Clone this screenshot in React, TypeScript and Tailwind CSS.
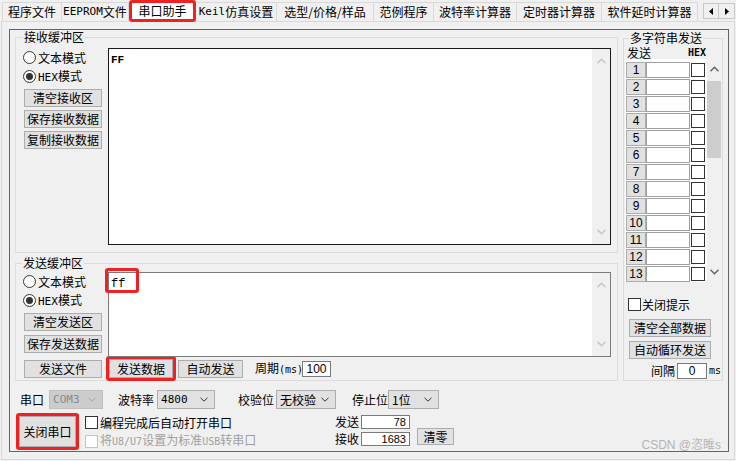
import React from "react";

const mono = "font-['DejaVu_Sans_Mono',monospace]";

const tabs = [
  { key: "t1", w: "w-[60px]", label: <>程序文件</> },
  { key: "t2", w: "w-[67px]", label: <><span className={`${mono} text-[11px]`}>EEPROM</span>文件</> },
  { key: "t3", w: "w-[67px]", label: <>串口助手</>, active: true },
  { key: "t4", w: "w-[81px]", label: <><span className={`${mono} text-[11px]`}>Keil</span>仿真设置</> },
  { key: "t5", w: "w-[97px]", label: <>选型/价格/样品</> },
  { key: "t6", w: "w-[60px]", label: <>范例程序</> },
  { key: "t7", w: "w-[83px]", label: <>波特率计算器</> },
  { key: "t8", w: "w-[85px]", label: <>定时器计算器</> },
  { key: "t9", w: "w-[96px]", label: <>软件延时计算器</> },
];

const Chevron = ({ dir, color }: { dir: "up" | "down"; color: string }) => (
  <svg width="9" height="6" viewBox="0 0 9 6">
    <path
      d={dir === "up" ? "M0.5 5.2 L4.5 1.2 L8.5 5.2" : "M0.5 0.8 L4.5 4.8 L8.5 0.8"}
      fill="none"
      stroke={color}
      strokeWidth="1.4"
    />
  </svg>
);

const Btn = ({ className = "", children }: { className?: string; children?: React.ReactNode }) => (
  <button
    type="button"
    className={`flex items-center justify-center bg-[#e1e1e1] border border-[#adadad] text-[12px] leading-none text-black ${className}`}
  >
    {children}
  </button>
);

const Radio = ({ checked, children }: { checked?: boolean; children: React.ReactNode }) => (
  <div className="flex items-center h-[19px]">
    <span className="w-[13px] h-[13px] rounded-full border border-[#333333] bg-white flex items-center justify-center">
      {checked && <span className="w-[7px] h-[7px] rounded-full bg-[#333333]" />}
    </span>
    <span className="ml-[2px] leading-[14px]">{children}</span>
  </div>
);

const Check = ({ disabled }: { disabled?: boolean }) => (
  <span
    className={`w-[13px] h-[13px] bg-white border ${disabled ? "border-[#c4c4c4]" : "border-[#333333]"}`}
  />
);

const Select = ({ className = "", disabled, children }: { className?: string; disabled?: boolean; children: React.ReactNode }) => (
  <div
    className={`h-[19px] flex items-center justify-between pl-[3px] pr-[6px] border ${
      disabled ? "bg-[#cccccc] border-[#bfbfbf] text-[#8a8a8a]" : "bg-[#e1e1e1] border-[#adadad] text-black"
    } ${className}`}
  >
    <span className="leading-[14px] whitespace-nowrap">{children}</span>
    <svg width="8" height="5" viewBox="0 0 8 5" className="shrink-0">
      <path d="M0.5 0.8 L4 4.2 L7.5 0.8" fill="none" stroke={disabled ? "#a8a8a8" : "#333333"} strokeWidth="1" />
    </svg>
  </div>
);

const TextBox = ({ className = "", border, children, overlay }: { className?: string; border: string; children?: React.ReactNode; overlay?: React.ReactNode }) => (
  <div className={`relative flex bg-white border ${border} ${className}`}>
    <div className="flex-1 pl-[2px] pt-[3px] leading-[12px]">{children}</div>
    <div className="w-[18px] bg-[#f0f0f0] flex flex-col items-center justify-between py-[9px]">
      <Chevron dir="up" color="#c4c4c4" />
      <Chevron dir="down" color="#c4c4c4" />
    </div>
    {overlay}
  </div>
);

function TabBar() {
  return (
    <div className="flex items-end h-[21px] pl-[2px]">
      {tabs.map((t, i) =>
        t.active ? (
          <div
            key={t.key}
            className={`${t.w} relative z-10 h-[22px] -mb-px bg-white border-[3px] border-[#ee2222] rounded-[3px] flex items-center justify-center leading-[14px]`}
          >
            {t.label}
          </div>
        ) : (
          <div
            key={t.key}
            className={`${t.w} h-[19px] border-t border-r border-[#d9d9d9] ${i === 0 ? "border-l" : ""} flex items-center justify-center leading-[14px] whitespace-nowrap`}
          >
            {t.label}
          </div>
        )
      )}
      <div className="self-start mt-[3px] ml-[5px] flex border border-[#c8c8c8] bg-[#f0f0f0]">
        <div className="w-[15px] h-[14px] flex items-center justify-center border-r border-[#c8c8c8]">
          <svg width="4" height="7" viewBox="0 0 4 7">
            <path d="M4 0 L0 3.5 L4 7 Z" fill="#000" />
          </svg>
        </div>
        <div className="w-[15px] h-[14px] flex items-center justify-center">
          <svg width="4" height="7" viewBox="0 0 4 7">
            <path d="M0 0 L4 3.5 L0 7 Z" fill="#000" />
          </svg>
        </div>
      </div>
    </div>
  );
}

export default function App() {
  return (
    <div className="relative w-[736px] h-[461px] overflow-hidden bg-[#f0f0f0] text-black text-[12px] font-['Noto_Sans_CJK_SC',sans-serif]">
      <TabBar />
      <div className="ml-[1px] w-[734px] h-[439px] border border-[#d9d9d9] pt-[7px] pl-[7px]">
        <div className="w-[720px] h-[423px] border border-[#646464] flex flex-col">
          {/* top: buffers + multi-string */}
          <div className="flex h-[351px] pl-[5px]">
            <div className="w-[603px] flex flex-col">
              <fieldset className="h-[223px] border border-[#dcdcdc] min-w-0">
                <legend className="ml-[7px] px-[1px] leading-[14px]">接收缓冲区</legend>
                <div className="flex pt-[4px] pl-[7px]">
                  <div className="w-[85px] flex flex-col">
                    <Radio>文本模式</Radio>
                    <Radio checked>
                      <span className={`${mono} text-[11px]`}>HEX</span>模式
                    </Radio>
                    <Btn className="mt-[3px] ml-[1px] w-[78px] h-[18px]">清空接收区</Btn>
                    <Btn className="mt-[3px] ml-[1px] w-[78px] h-[18px]">保存接收数据</Btn>
                    <Btn className="mt-[3px] ml-[1px] w-[78px] h-[18px]">复制接收数据</Btn>
                  </div>
                  <TextBox className="w-[503px] h-[197px]" border="border-[#1a1a1a]">
                    <span className="font-['Liberation_Mono',monospace] text-[11px] font-bold">FF</span>
                  </TextBox>
                </div>
              </fieldset>

              <fieldset className="mt-[3px] h-[125px] border border-[#dcdcdc] min-w-0">
                <legend className="ml-[6px] px-[1px] leading-[14px]">发送缓冲区</legend>
                <div className="flex flex-col pt-[2px] pl-[7px]">
                  <div className="flex">
                    <div className="w-[85px] flex flex-col">
                      <Radio>文本模式</Radio>
                      <Radio checked>
                        <span className={`${mono} text-[11px]`}>HEX</span>模式
                      </Radio>
                      <Btn className="mt-[3px] ml-[1px] w-[78px] h-[18px]">清空发送区</Btn>
                      <Btn className="mt-[4px] ml-[1px] w-[78px] h-[18px]">保存发送数据</Btn>
                    </div>
                    <TextBox
                      className="w-[503px] h-[85px]"
                      border="border-[#7a7a7a]"
                      overlay={
                        <div className="absolute left-[-4px] top-[-5px] w-[34px] h-[25px] border-[3px] border-[#ee2222] rounded-[3px]" />
                      }
                    >
                      <span className="font-['Liberation_Mono',monospace] text-[12px]">ff</span>
                    </TextBox>
                  </div>
                  <div className="flex items-center h-[23px]">
                    <Btn className="ml-[1px] w-[78px] h-[18px]">发送文件</Btn>
                    <div className="ml-[4px] w-[70px] h-[25px] border-[3px] border-[#ee2222] rounded-[3px]">
                      <Btn className="w-full h-full border-[#0078d7]">发送数据</Btn>
                    </div>
                    <Btn className="ml-[2px] w-[65px] h-[18px]">自动发送</Btn>
                    <span className="ml-[12px] w-[47px] leading-[14px] whitespace-nowrap">
                      周期<span className={`${mono} text-[10px]`}>(ms)</span>
                    </span>
                    <div className="w-[29px] h-[16px] border border-[#7a7a7a] bg-white flex items-center justify-center font-['Liberation_Sans',sans-serif] leading-none">
                      100
                    </div>
                  </div>
                </div>
              </fieldset>
            </div>

            <fieldset className="ml-[5px] mt-[1px] w-[100px] h-[350px] border border-[#dcdcdc] min-w-0">
              <legend className="ml-[5px] px-[1px] leading-[14px]">多字符串发送</legend>
              <div className="flex items-end justify-between h-[14px] pl-[3px] pr-[16px] leading-[12px]">
                <span>发送</span>
                <span className={`${mono} text-[10px] font-bold`}>HEX</span>
              </div>
              <div className="ml-[1px] flex h-[223px]">
                <div className="w-[82px] bg-white pt-[2px] pl-[1px]">
                  {Array.from({ length: 13 }, (_, i) => (
                    <div key={i} className="flex items-center h-[17px]">
                      <Btn className="w-[20px] h-[16px] font-['Liberation_Sans',sans-serif]">{i + 1}</Btn>
                      <div className="w-[44px] h-[16px] border border-[#a0a0a0] bg-white" />
                      <span className="ml-[1px] w-[14px] h-[14px] border border-[#333333] bg-white" />
                    </div>
                  ))}
                </div>
                <div className="w-[14px] bg-[#f0f0f0] flex flex-col items-center">
                  <div className="h-[20px] flex items-center">
                    <Chevron dir="up" color="#606060" />
                  </div>
                  <div className="mt-[2px] w-full h-[77px] bg-[#cdcdcd]" />
                  <div className="flex-1" />
                  <div className="h-[20px] flex items-center">
                    <Chevron dir="down" color="#606060" />
                  </div>
                </div>
              </div>
              <div className="mt-[14px] flex items-center h-[17px] pl-[4px]">
                <Check />
                <span className="ml-[1px] leading-[14px]">关闭提示</span>
              </div>
              <Btn className="mt-[6px] ml-[5px] w-[82px] h-[18px]">清空全部数据</Btn>
              <Btn className="mt-[4px] ml-[5px] w-[82px] h-[18px]">自动循环发送</Btn>
              <div className="mt-[4px] flex items-center h-[16px] pl-[27px]">
                <span className="leading-none">间隔</span>
                <div className="ml-[2px] w-[30px] h-[16px] border border-[#7a7a7a] bg-white flex items-center justify-center font-['Liberation_Sans',sans-serif] leading-none">
                  0
                </div>
                <span className={`ml-[2px] ${mono} text-[10px] leading-none`}>ms</span>
              </div>
            </fieldset>
          </div>

          {/* serial settings */}
          <div className="flex items-center h-[19px] mt-[9px] pl-[10px] leading-none">
            <span>串口</span>
            <Select disabled className={`ml-[5px] w-[54px] ${mono} text-[11px]`}>COM3</Select>
            <span className="ml-[15px]">波特率</span>
            <Select className={`ml-[3px] w-[58px] ${mono} text-[11px]`}>4800</Select>
            <span className="ml-[23px]">校验位</span>
            <Select className="ml-[2px] w-[60px] pl-[1px]">无校验</Select>
            <span className="ml-[16px]">停止位</span>
            <Select className="w-[51px] pl-[1px]">1位</Select>
          </div>

          <div className="flex mt-[4px] pl-[6px]">
            <div className="w-[63px] h-[37px] border-[3px] border-[#ee2222] rounded-[3px]">
              <Btn className="w-full h-full">关闭串口</Btn>
            </div>
            <div className="ml-[6px] w-[250px] flex flex-col">
              <div className="flex items-center h-[19px]">
                <Check />
                <span className="ml-[2px] leading-[14px]">编程完成后自动打开串口</span>
              </div>
              <div className="flex items-center h-[18px] text-[#a0a0a0]">
                <Check disabled />
                <span className="ml-[2px] leading-[14px] whitespace-nowrap">
                  将<span className={`${mono} text-[10px]`}>U8/U7</span>设置为标准<span className={`${mono} text-[10px]`}>USB</span>转串口
                </span>
              </div>
            </div>
            <div className="flex flex-col pt-[2px] gap-[3px]">
              <div className="flex items-center h-[14px]">
                <span className="w-[26px] leading-none">发送</span>
                <div className="w-[49px] h-[14px] border border-[#7a7a7a] bg-white flex items-center justify-end pr-[3px] font-['Liberation_Sans',sans-serif] text-[11px] leading-none">
                  78
                </div>
              </div>
              <div className="flex items-center h-[14px]">
                <span className="w-[26px] leading-none">接收</span>
                <div className="w-[49px] h-[14px] border border-[#7a7a7a] bg-white flex items-center justify-end pr-[3px] font-['Liberation_Sans',sans-serif] text-[11px] leading-none">
                  1683
                </div>
              </div>
            </div>
            <Btn className="ml-[7px] mt-[15px] w-[37px] h-[17px]">清零</Btn>
          </div>
        </div>
      </div>

      <div className="absolute right-[15px] top-[437px] leading-[16px] text-[12px] text-[#b4b4b4] font-['Liberation_Sans','Noto_Sans_CJK_SC',sans-serif]">
        CSDN @恣睢s
      </div>
    </div>
  );
}
